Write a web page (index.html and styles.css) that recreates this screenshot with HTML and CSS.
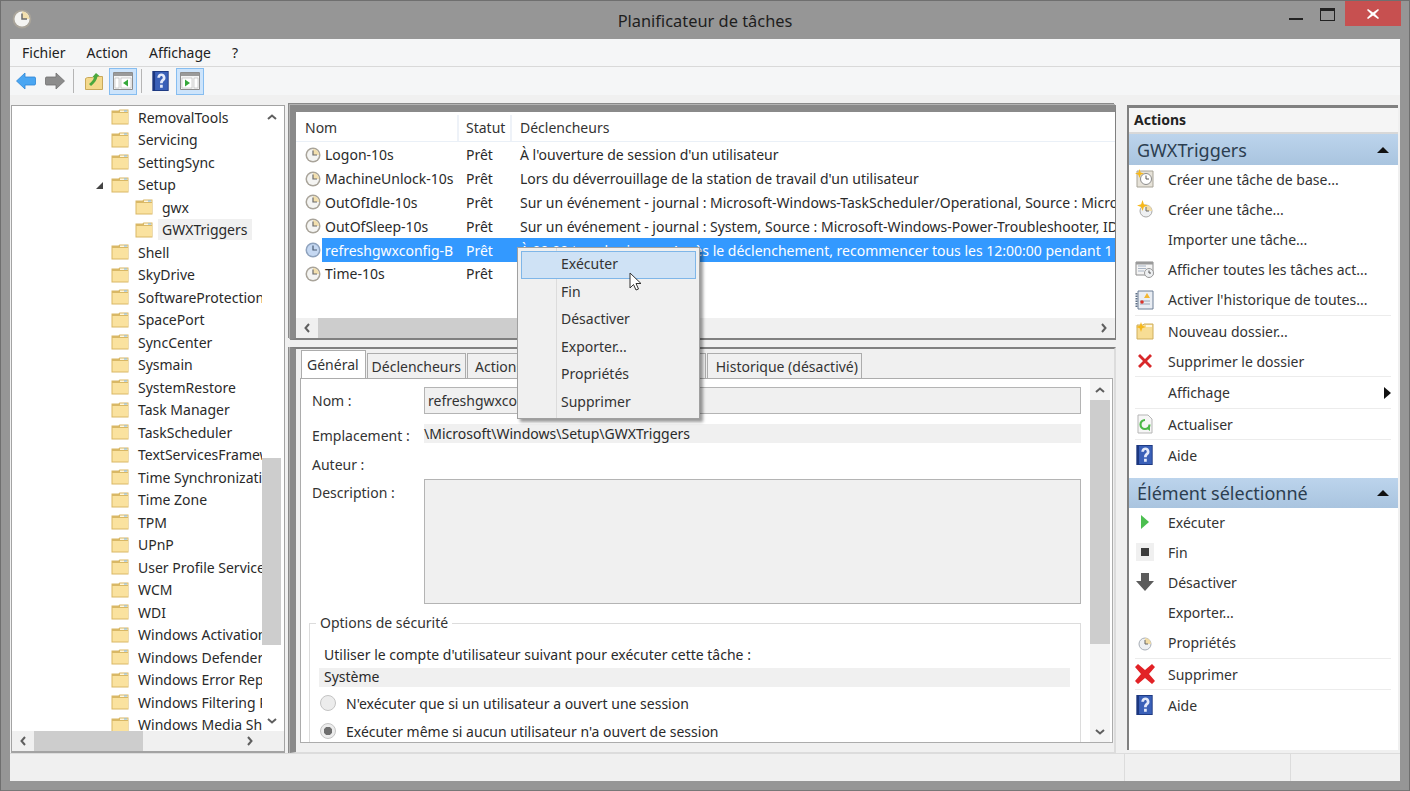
FILE: index.html
```html
<!DOCTYPE html>
<html lang="fr">
<head>
    <meta charset="UTF-8">
    <title>Planificateur de tâches</title>
    <link rel="stylesheet" href="styles.css">
</head>
<body>
    <svg class="icon-defs" width="0" height="0">
        <defs>
            <symbol id="clock" viewBox="0 0 16 16">
                <circle cx="8" cy="8" r="7.5" fill="#a9a49a"/>
                <circle cx="8" cy="8" r="6" fill="#f4f4f2"/>
                <path d="M8 2a6 6 0 0 1 6 6H8z" fill="#f2dfae"/>
                <path d="M8 3.5V8h4" fill="none" stroke="#6b6b6b" stroke-width="1.2"/>
            </symbol>
            <symbol id="clock-sel" viewBox="0 0 16 16">
                <circle cx="8" cy="8" r="7.5" fill="#8ea2bd"/>
                <circle cx="8" cy="8" r="6" fill="#c5d8f2"/>
                <path d="M8 3.5V8h4" fill="none" stroke="#4a5a70" stroke-width="1.2"/>
            </symbol>
            <symbol id="folder" viewBox="0 0 18 16">
                <path d="M.5 3.5V1.5h7l1-1h9v15H.5z" fill="#d9b866"/>
                <path d="M1.5 4h15.500v10.500H1.500z" fill="#fae29f"/>
                <path d="M9 1.500h7.500V3H9z" fill="#fdf6df"/>
                <path d="M13 1.500h3v1h-3z" fill="#7fb5dd"/>
            </symbol>
            <symbol id="help" viewBox="0 0 18 22">
                <path d="M0 0h18v22H0z" fill="#1c377f"/>
                <path d="M3 1h14v20H3z" fill="#3a60b8"/>
                <path d="M5.500 7.500c0-6.500 9-6.500 9 0 0 3.500-3 3.500-3 6H8.500c0-4.500 3-4 3-6 0-2.500-3-2.500-3 0zM8.500 15h3v3.500h-3z" fill="#e4eafa"/>
            </symbol>
            <symbol id="pane-left" viewBox="0 0 20 18">
                <path d="M.5.5h19v17H.5z" fill="#f4f4f4" stroke="#8d8d8d"/>
                <path d="M1 1h18v3H1z" fill="#9a9a9a"/>
                <path d="M2 6h4v10H2zM8 6h10v10H8z" fill="#fff" stroke="#b5b5b5" stroke-width=".6"/>
                <path d="M15 7.500v7l-5-3.500z" fill="#35a83a"/>
            </symbol>
            <symbol id="pane-right" viewBox="0 0 20 18">
                <path d="M.5.5h19v17H.5z" fill="#f4f4f4" stroke="#8d8d8d"/>
                <path d="M1 1h18v3H1z" fill="#9a9a9a"/>
                <path d="M2 6h10v10H2zM14 6h4v10h-4z" fill="#fff" stroke="#b5b5b5" stroke-width=".6"/>
                <path d="M5 7.500v7l5-3.500z" fill="#35a83a"/>
            </symbol>
            <symbol id="star" viewBox="0 0 8 8">
                <path d="M4 0l1 3 3 1-3 1-1 3-1-3-3-1 3-1z" fill="#f6b81c"/>
            </symbol>
            <symbol id="chev-up" viewBox="0 0 10 6">
                <path d="M1 5l4-3.500L9 5" fill="none" stroke="#5f5f5f" stroke-width="2"/>
            </symbol>
            <symbol id="chev-down" viewBox="0 0 10 6">
                <path d="M1 1l4 3.500L9 1" fill="none" stroke="#5f5f5f" stroke-width="2"/>
            </symbol>
            <symbol id="chev-left" viewBox="0 0 6 10">
                <path d="M5 1L1.500 5 5 9" fill="none" stroke="#5f5f5f" stroke-width="2"/>
            </symbol>
            <symbol id="chev-right" viewBox="0 0 6 10">
                <path d="M1 1l3.500 4L1 9" fill="none" stroke="#5f5f5f" stroke-width="2"/>
            </symbol>
        </defs>
    </svg>

    <div class="window">
        <header class="titlebar">
            <div class="title-left">
                <svg class="app-icon"><use href="#clock"/></svg>
            </div>
            <div class="title-text">Planificateur de tâches</div>
            <div class="caption">
                <span class="cap-min"></span>
                <span class="cap-max"></span>
                <span class="cap-close">
                    <svg width="12" height="10" viewBox="0 0 12 10"><path d="M1 0l5 3.500L11 0l1 1-4 4 4 4-1 1-5-3.500L1 10 0 9l4-4-4-4z" fill="#fff"/></svg>
                </span>
            </div>
        </header>

        <div class="client">
            <nav class="menubar">
                <span>Fichier</span>
                <span>Action</span>
                <span>Affichage</span>
                <span>?</span>
            </nav>

            <div class="toolbar">
                <svg class="tb-arrow" viewBox="0 0 20 18"><path d="M9 1v4h9.500c.5 0 1 .5 1 1v6c0 .5-.5 1-1 1H9v4L.5 9z" fill="#4aa6f2" stroke="#2f86d6" stroke-width=".8" stroke-linejoin="round"/></svg>
                <svg class="tb-arrow tb-forward" viewBox="0 0 20 18"><path d="M11 1v4H1.500c-.5 0-1 .5-1 1v6c0 .5.500 1 1 1H11v4l8.500-8z" fill="#8c8c8c" stroke="#707070" stroke-width=".8" stroke-linejoin="round"/></svg>
                <span class="tb-sep"></span>
                <svg class="tb-up" viewBox="0 0 18 18">
                    <path d="M.5 6.500l2-1h5l1-1h9v13H.5z" fill="#f4d98c" stroke="#c9a95a"/>
                    <path d="M4 12c2-2 4-3 5-6.500L7.500 5 11 1l3.500 3-2 .5C12 8 9.500 11 6 14z" fill="#4aa83e"/>
                </svg>
                <span class="tb-toggle"><svg class="tb-pane"><use href="#pane-left"/></svg></span>
                <span class="tb-sep tb-sep-b"></span>
                <svg class="tb-help"><use href="#help"/></svg>
                <span class="tb-toggle tb-toggle-b"><svg class="tb-pane"><use href="#pane-right"/></svg></span>
            </div>

            <main class="panes">
                <section class="tree-pane">
                    <div class="tree-body">
                        <ul class="tree">
                            <li><svg class="folder"><use href="#folder"/></svg>RemovalTools</li>
                            <li><svg class="folder"><use href="#folder"/></svg>Servicing</li>
                            <li><svg class="folder"><use href="#folder"/></svg>SettingSync</li>
                            <li class="open"><svg class="folder"><use href="#folder"/></svg>Setup</li>
                            <li class="sub"><svg class="folder"><use href="#folder"/></svg>gwx</li>
                            <li class="sub"><svg class="folder"><use href="#folder"/></svg><span class="tree-current">GWXTriggers</span></li>
                            <li><svg class="folder"><use href="#folder"/></svg>Shell</li>
                            <li><svg class="folder"><use href="#folder"/></svg>SkyDrive</li>
                            <li><svg class="folder"><use href="#folder"/></svg>SoftwareProtectionPlatform</li>
                            <li><svg class="folder"><use href="#folder"/></svg>SpacePort</li>
                            <li><svg class="folder"><use href="#folder"/></svg>SyncCenter</li>
                            <li><svg class="folder"><use href="#folder"/></svg>Sysmain</li>
                            <li><svg class="folder"><use href="#folder"/></svg>SystemRestore</li>
                            <li><svg class="folder"><use href="#folder"/></svg>Task Manager</li>
                            <li><svg class="folder"><use href="#folder"/></svg>TaskScheduler</li>
                            <li><svg class="folder"><use href="#folder"/></svg>TextServicesFramework</li>
                            <li><svg class="folder"><use href="#folder"/></svg>Time Synchronization</li>
                            <li><svg class="folder"><use href="#folder"/></svg>Time Zone</li>
                            <li><svg class="folder"><use href="#folder"/></svg>TPM</li>
                            <li><svg class="folder"><use href="#folder"/></svg>UPnP</li>
                            <li><svg class="folder"><use href="#folder"/></svg>User Profile Service</li>
                            <li><svg class="folder"><use href="#folder"/></svg>WCM</li>
                            <li><svg class="folder"><use href="#folder"/></svg>WDI</li>
                            <li><svg class="folder"><use href="#folder"/></svg>Windows Activation</li>
                            <li><svg class="folder"><use href="#folder"/></svg>Windows Defender</li>
                            <li><svg class="folder"><use href="#folder"/></svg>Windows Error Reporting</li>
                            <li><svg class="folder"><use href="#folder"/></svg>Windows Filtering Platform</li>
                            <li><svg class="folder"><use href="#folder"/></svg>Windows Media Sharing</li>
                        </ul>
                        <div class="vscroll tree-vscroll">
                            <span class="chev"><svg class="chev-v"><use href="#chev-up"/></svg></span>
                            <span class="vthumb-space"></span>
                            <span class="vthumb"></span>
                            <span class="chev chev-end"><svg class="chev-v"><use href="#chev-down"/></svg></span>
                        </div>
                    </div>
                    <div class="hscroll tree-hscroll">
                        <span class="h-chev"><svg class="chev-h"><use href="#chev-left"/></svg></span>
                        <span class="hthumb"></span>
                        <span class="h-chev h-chev-end"><svg class="chev-h"><use href="#chev-right"/></svg></span>
                    </div>
                </section>

                <section class="center-pane">
                    <div class="list-panel">
                        <div class="list-head">
                            <span class="col-name">Nom</span>
                            <span class="col-status">Statut</span>
                            <span class="col-trigger">Déclencheurs</span>
                        </div>
                        <div class="list-rows">
                            <div class="task"><svg class="clock"><use href="#clock"/></svg><div class="task-cells"><span class="cell-name">Logon-10s</span><span class="cell-status">Prêt</span><span class="cell-trigger">À l'ouverture de session d'un utilisateur</span></div></div>
                            <div class="task"><svg class="clock"><use href="#clock"/></svg><div class="task-cells"><span class="cell-name">MachineUnlock-10s</span><span class="cell-status">Prêt</span><span class="cell-trigger">Lors du déverrouillage de la station de travail d'un utilisateur</span></div></div>
                            <div class="task"><svg class="clock"><use href="#clock"/></svg><div class="task-cells"><span class="cell-name">OutOfIdle-10s</span><span class="cell-status">Prêt</span><span class="cell-trigger">Sur un événement - journal : Microsoft-Windows-TaskScheduler/Operational, Source : Microsoft-Windows</span></div></div>
                            <div class="task"><svg class="clock"><use href="#clock"/></svg><div class="task-cells"><span class="cell-name">OutOfSleep-10s</span><span class="cell-status">Prêt</span><span class="cell-trigger">Sur un événement - journal : System, Source : Microsoft-Windows-Power-Troubleshooter, ID</span></div></div>
                            <div class="task selected"><svg class="clock"><use href="#clock-sel"/></svg><div class="task-cells"><span class="cell-name">refreshgwxconfig-B</span><span class="cell-status">Prêt</span><span class="cell-trigger">À 00:00 tous les jours - Après le déclenchement, recommencer tous les 12:00:00 pendant 1 jour</span></div></div>
                            <div class="task"><svg class="clock"><use href="#clock"/></svg><div class="task-cells"><span class="cell-name">Time-10s</span><span class="cell-status">Prêt</span><span class="cell-trigger"></span></div></div>
                        </div>
                        <div class="hscroll list-hscroll">
                            <span class="h-chev"><svg class="chev-h"><use href="#chev-left"/></svg></span>
                            <span class="hthumb"></span>
                            <span class="h-chev h-chev-end"><svg class="chev-h"><use href="#chev-right"/></svg></span>
                        </div>
                    </div>

                    <div class="detail-panel">
                        <div class="tabs">
                            <span class="tab active">Général</span>
                            <span class="tab">Déclencheurs</span>
                            <span class="tab tab-mid">Actions</span>
                            <span class="tab tab-mid">Conditions</span>
                            <span class="tab tab-mid">Paramètres</span>
                            <span class="tab tab-last">Historique (désactivé)</span>
                        </div>
                        <div class="tab-body">
                            <div class="form">
                                <div class="form-row row-nom">
                                    <label>Nom :</label>
                                    <div class="field field-box">refreshgwxconfig-B</div>
                                </div>
                                <div class="form-row row-place">
                                    <label>Emplacement :</label>
                                    <div class="field field-flat">\Microsoft\Windows\Setup\GWXTriggers</div>
                                </div>
                                <div class="form-row row-author">
                                    <label>Auteur :</label>
                                </div>
                                <div class="form-row row-desc">
                                    <label>Description :</label>
                                    <div class="field field-area"></div>
                                </div>
                                <div class="security">
                                    <span class="legend">Options de sécurité</span>
                                    <p class="account-label">Utiliser le compte d'utilisateur suivant pour exécuter cette tâche :</p>
                                    <div class="account">Système</div>
                                    <div class="radio-row"><span class="radio"></span>N'exécuter que si un utilisateur a ouvert une session</div>
                                    <div class="radio-row"><span class="radio checked"></span>Exécuter même si aucun utilisateur n'a ouvert de session</div>
                                </div>
                            </div>
                            <div class="vscroll form-vscroll">
                                <span class="chev"><svg class="chev-v"><use href="#chev-up"/></svg></span>
                                <span class="vthumb"></span>
                                <span class="chev chev-end"><svg class="chev-v"><use href="#chev-down"/></svg></span>
                            </div>
                        </div>
                    </div>
                </section>

                <aside class="actions-pane">
                    <div class="actions-title">Actions</div>
                    <div class="group-head">GWXTriggers<span class="collapse"></span></div>
                    <ul class="action-list">
                        <li><svg class="a-icon" viewBox="0 0 20 20"><path d="M2 2h16v16H2z" fill="#e6e2d8" stroke="#a8a498"/><circle cx="11" cy="10" r="5.500" fill="#fff" stroke="#8c8c8c"/><path d="M11 6.500V10h3" fill="none" stroke="#555"/><use href="#star" x="0" y="0" width="9" height="9"/></svg>Créer une tâche de base...</li>
                        <li><svg class="a-icon" viewBox="0 0 20 20"><circle cx="11" cy="12" r="6" fill="#eef0f2" stroke="#a8a8a8"/><path d="M11 6a6 6 0 0 1 6 6h-6z" fill="#f2dca5"/><path d="M11 8v4h3" fill="none" stroke="#666"/><use href="#star" x="2" y="1" width="11" height="11"/></svg>Créer une tâche...</li>
                        <li><span class="a-icon"></span>Importer une tâche...</li>
                        <li><svg class="a-icon" viewBox="0 0 20 20"><path d="M1 3h17v13H1z" fill="#f4f4f4" stroke="#8c8c8c"/><path d="M1 3h17v2.500H1z" fill="#9a9a9a"/><path d="M3 7h8M3 9.500h8M3 12h6" stroke="#a8b4c4"/><circle cx="14" cy="14" r="4.500" fill="#eef0f2" stroke="#999"/><path d="M14 11.500V14h2" fill="none" stroke="#555"/></svg>Afficher toutes les tâches act...</li>
                        <li class="sep sep-tall"><svg class="a-icon" viewBox="0 0 20 20"><path d="M3 1h15v18H3z" fill="#e9edf3" stroke="#6c7e96"/><path d="M1.500 3v14" stroke="#5c6e86" stroke-width="2" stroke-dasharray="1.500 1"/><path d="M5 11h10M5 14h10" stroke="#9aa6b6"/><path d="M12 3l3 5H9z" fill="#f2b632"/><circle cx="7" cy="12" r="1.800" fill="#d9342b"/></svg>Activer l'historique de toutes...</li>
                        <li><svg class="a-icon" viewBox="0 0 20 20"><path d="M2 4h6l1-1h9v15H2z" fill="#f7dd95" stroke="#cfae5c"/><path d="M11 4h6v2h-6z" fill="#fdf6df"/><use href="#star" x="1" y="1" width="10" height="10"/></svg>Nouveau dossier...</li>
                        <li class="sep"><svg class="a-icon" viewBox="0 0 20 20"><path d="M3 5l2-2 5 5 5-5 2 2-5 5 5 5-2 2-5-5-5 5-2-2 5-5z" fill="#d8282a"/></svg>Supprimer le dossier</li>
                        <li class="sep sep-tall"><span class="a-icon"></span>Affichage<span class="submenu"></span></li>
                        <li class="sep"><svg class="a-icon" viewBox="0 0 20 20"><path d="M3 1h10l4 4v14H3z" fill="#f6f6f6" stroke="#b5b5b5"/><path d="M10 6a4.500 4.500 0 1 0 4.500 4.500" fill="none" stroke="#4cb848" stroke-width="2.200"/><path d="M11 14l4 3v-4z" fill="#4cb848"/></svg>Actualiser</li>
                        <li><svg class="a-icon a-help"><use href="#help"/></svg>Aide</li>
                    </ul>
                    <div class="group-head group-two">Élément sélectionné<span class="collapse"></span></div>
                    <ul class="action-list">
                        <li><svg class="a-icon" viewBox="0 0 20 20"><path d="M6 3l8 7-8 7z" fill="#4cbf50"/></svg>Exécuter</li>
                        <li><svg class="a-icon" viewBox="0 0 20 20"><path d="M1 1h18v18H1z" fill="#f0f0f0"/><path d="M6 6h8v8H6z" fill="#3c3c3c"/></svg>Fin</li>
                        <li><svg class="a-icon" viewBox="0 0 20 20"><path d="M6 1h8v8h5l-9 10L1 9h5z" fill="#5c5c5c"/></svg>Désactiver</li>
                        <li><span class="a-icon"></span>Exporter...</li>
                        <li class="sep sep-tall"><svg class="a-icon" viewBox="0 0 20 20"><circle cx="10" cy="11" r="6" fill="#eef0f2" stroke="#a8aeb6"/><path d="M10 5a6 6 0 0 1 6 6h-6z" fill="#f2dca5"/><path d="M10 7v4h3" fill="none" stroke="#666"/></svg>Propriétés</li>
                        <li class="sep"><svg class="a-icon a-big" viewBox="0 0 22 22"><path d="M1 4l3-3 7 6 7-6 3 3-6 7 6 7-3 3-7-6-7 6-3-3 6-7z" fill="#e22226"/></svg>Supprimer</li>
                        <li><svg class="a-icon a-help"><use href="#help"/></svg>Aide</li>
                    </ul>
                </aside>
            </main>

            <footer class="statusbar">
                <span class="status-main"></span>
                <span class="status-a"></span>
                <span class="status-b"></span>
            </footer>
        </div>

        <ul class="context-menu">
            <li class="hover">Exécuter</li>
            <li>Fin</li>
            <li>Désactiver</li>
            <li>Exporter...</li>
            <li>Propriétés</li>
            <li>Supprimer</li>
        </ul>
        <svg class="cursor" width="14" height="20" viewBox="0 0 14 20"><path d="M1 1v15l3.500-3.500L7 18l2.500-1-2.500-5.500h5z" fill="#fff" stroke="#333" stroke-width="1"/></svg>
    </div>
</body>
</html>
```

FILE: styles.css
```css
* {
    box-sizing: border-box;
}

html,
body {
    margin: 0;
    height: 100%;
    overflow: hidden;
}

body {
    font-family: "Noto Sans", sans-serif;
    font-size: 14px;
    color: #2a2a2a;
}

ul {
    list-style: none;
    margin: 0;
    padding: 0;
}

.icon-defs {
    position: absolute;
}

.window {
    position: relative;
    width: 1410px;
    height: 791px;
    display: flex;
    flex-direction: column;
    padding: 0 9px 9px;
    background: #969696;
    border: 1px solid #6f6f6f;
    border-bottom-color: #777;
}

/* title bar */
.titlebar {
    height: 38px;
    flex: none;
    display: grid;
    grid-template-columns: 1fr auto 1fr;
}

.app-icon {
    width: 20px;
    height: 20px;
    margin: 8px 0 0 2px;
}

.title-text {
    font-size: 16.400px;
    line-height: 40px;
    color: #1e1e1e;
}

.caption {
    display: flex;
    justify-content: flex-end;
    align-items: flex-start;
    margin-right: -1px;
}

.cap-min {
    width: 14px;
    height: 2px;
    margin: 17px 17px 0 0;
    background: #222;
}

.cap-max {
    width: 15px;
    height: 13px;
    margin: 7px 10px 0 0;
    border: 1px solid #222;
    border-top-width: 3px;
}

.cap-close {
    width: 56px;
    height: 25px;
    display: flex;
    align-items: center;
    justify-content: center;
    background: #c75050;
}

.client {
    flex: 1;
    min-height: 0;
    display: flex;
    flex-direction: column;
    background: #f0f0f0;
}

/* menu and toolbar */
.menubar {
    height: 28px;
    flex: none;
    display: flex;
    align-items: center;
    gap: 21px;
    padding: 0 0 0 12px;
    background: #f5f6f7;
    border-bottom: 1px solid #d9d9d9;
    color: #222;
}

.toolbar {
    height: 28px;
    flex: none;
    display: flex;
    align-items: center;
    background: #f5f6f7;
}

.tb-arrow {
    width: 20px;
    height: 18px;
    margin-left: 6px;
}

.tb-forward {
    margin-left: 9px;
}

.tb-sep {
    width: 1px;
    height: 24px;
    margin: 0 11px 0 8px;
    background: #b5b5b5;
}

.tb-sep-b {
    margin: 0 10px 0 4px;
}

.tb-up {
    width: 18px;
    height: 18px;
}

.tb-toggle {
    width: 28px;
    height: 27px;
    margin-left: 6px;
    display: flex;
    align-items: center;
    justify-content: center;
    background: #cde4fb;
    border: 1px solid #86bdf0;
}

.tb-toggle-b {
    margin-left: 7px;
}

.tb-pane {
    width: 20px;
    height: 18px;
}

.tb-help {
    width: 17px;
    height: 20px;
}

/* panes */
.panes {
    flex: 1;
    min-height: 0;
    display: flex;
    padding: 10px 2px 0 1px;
}

.tree-pane {
    width: 274px;
    flex: none;
    display: flex;
    flex-direction: column;
    background: #fff;
    border: 1px solid #a3a3a3;
    border-bottom-width: 2px;
}

.tree-body {
    flex: 1;
    min-height: 0;
    display: flex;
}

.tree {
    flex: 1;
    min-width: 0;
    overflow: hidden;
}

.tree li {
    height: 22.5px;
    display: flex;
    align-items: center;
    padding-left: 99px;
    white-space: nowrap;
    color: #2a2a2a;
}

.tree li.sub {
    padding-left: 123px;
}

.tree li.open {
    position: relative;
}

.tree li.open::before {
    content: "";
    position: absolute;
    left: 84px;
    top: 8px;
    border-left: 7px solid transparent;
    border-bottom: 7px solid #444;
}

.folder {
    width: 18px;
    height: 16px;
    flex: none;
    margin-right: 9px;
}

.tree-current {
    background: #f0f0f0;
    margin-left: -4px;
    padding: 1px 4px;
}

.vscroll {
    flex: none;
    display: flex;
    flex-direction: column;
    align-items: center;
    background: #f0f0f0;
}

.tree-vscroll {
    width: 19px;
    margin-right: 3px;
    background: #fff;
}

.chev {
    height: 21px;
    flex: none;
    display: flex;
    align-items: center;
}

.chev-end {
    margin-top: auto;
}

.chev-v {
    width: 10px;
    height: 6px;
    display: block;
}

.vthumb-space {
    height: 331px;
    flex: none;
}

.vthumb {
    width: 100%;
    height: 187px;
    flex: none;
    background: #cdcdcd;
}

.hscroll {
    height: 20px;
    flex: none;
    display: flex;
    align-items: center;
    background: #f0f0f0;
}

.h-chev {
    width: 22px;
    flex: none;
    display: flex;
    align-items: center;
    justify-content: center;
}

.h-chev-end {
    margin-left: auto;
}

.chev-h {
    width: 6px;
    height: 10px;
    display: block;
}

.hthumb {
    height: 100%;
    background: #cdcdcd;
}

.tree-hscroll .hthumb {
    width: 109px;
}

.tree-hscroll {
    padding-right: 23px;
}

/* centre */
.center-pane {
    width: 826px;
    flex: none;
    margin-left: 5px;
    display: flex;
    flex-direction: column;
    min-width: 0;
}

.list-panel {
    height: 235px;
    flex: none;
    display: flex;
    flex-direction: column;
    background: #fff;
    border: 1px solid #8a8a8a;
    border-width: 7px 1px 2px 6px;
    border-color: #8a8a8a #808080 #808080 #8a8a8a;
    box-shadow: -1px -1px 0 #b4b4b4, -2px -2px 0 #8a8a8a;
}

.list-head {
    height: 30px;
    flex: none;
    display: flex;
    align-items: center;
    padding-top: 2px;
    border-bottom: 1px solid #eaf0f7;
    color: #333;
}

.col-name {
    width: 163px;
    padding-left: 9px;
    line-height: 26px;
    border-right: 2px solid #eef2f8;
}

.col-status {
    width: 53px;
    padding-left: 7px;
    line-height: 26px;
    border-right: 2px solid #eef2f8;
}

.col-trigger {
    padding-left: 8px;
}

.list-rows {
    flex: 1;
    min-height: 0;
    padding-top: 1px;
    overflow: hidden;
}

.task {
    height: 23.8px;
    display: flex;
    align-items: center;
    padding-left: 9px;
}

.clock {
    width: 16px;
    height: 16px;
    flex: none;
}

.task-cells {
    flex: 1;
    min-width: 0;
    height: 100%;
    display: flex;
    align-items: center;
    margin-left: 1px;
    white-space: nowrap;
    overflow: hidden;
}

.cell-name {
    width: 144px;
    padding-left: 3px;
    flex: none;
    overflow: hidden;
}

.cell-status {
    width: 54px;
    flex: none;
}

.selected .task-cells {
    background: #3399ff;
    color: #fff;
}

.list-hscroll .hthumb {
    width: 380px;
}

.detail-panel {
    flex: 1;
    min-height: 0;
    margin-top: 7px;
    padding: 2px 0 9px 4px;
    display: flex;
    flex-direction: column;
    border-top: 2px solid #808080;
    border-left: 6px solid #8a8a8a;
    border-bottom: 1px solid #dcdcdc;
    border-right: 2px solid #dcdcdc;
    background: #f0f0f0;
    box-shadow: -1px 0 0 #b4b4b4, -2px 0 0 #8a8a8a;
}

.tabs {
    height: 27px;
    flex: none;
    display: flex;
    padding-left: 1px;
    gap: 1px;
    position: relative;
    z-index: 1;
}

.tab {
    padding: 2px 4px 0;
    margin-top: 2px;
    height: 25px;
    line-height: 21px;
    background: #f0f0f0;
    border: 1px solid #acacac;
    border-bottom: 0;
    color: #333;
    white-space: nowrap;
}

.tab.active {
    height: 28px;
    margin-top: -1px;
    padding: 3px 6px 0 5px;
    background: #fff;
}

.tab-mid {
    padding: 2px 5px 0 7px;
}

.tab-last {
    padding: 2px 3px 0 8px;
}

.tab-body {
    flex: 1;
    min-height: 0;
    display: flex;
    background: #fff;
    border: 1px solid #acacac;
    margin-right: 1px;
    overflow: hidden;
}

.form {
    flex: 1;
    min-width: 0;
    padding: 8px 1px 0 11px;
}

.form-row {
    display: flex;
}

.form-row label {
    width: 112px;
    flex: none;
    color: #333;
}

.field {
    flex: 1;
    background: #f0f0f0;
}

.row-nom {
    height: 27px;
    align-items: center;
}

.field-box {
    height: 27px;
    padding: 3px 3px;
    border: 1px solid #b4b4b4;
    line-height: 19px;
    white-space: nowrap;
    color: #333;
}

.row-place {
    margin-top: 10px;
    height: 19px;
    align-items: center;
}

.row-place label {
    padding-top: 4px;
}

.field-flat {
    height: 19px;
    line-height: 19px;
}

.row-author {
    margin-top: 11px;
    height: 20px;
    align-items: center;
}

.row-desc {
    margin-top: 5px;
}

.row-desc label {
    padding-top: 4px;
}

.field-area {
    height: 125px;
    border: 1px solid #b4b4b4;
}

.security {
    position: relative;
    margin: 19px 0 0 -3px;
    height: 130px;
    padding: 21px 10px 0 9px;
    border: 1px solid #dcdcdc;
    border-bottom: 0;
}

.legend {
    position: absolute;
    top: -11px;
    left: 6px;
    padding: 0 4px;
    background: #fff;
    color: #333;
}

.account-label {
    margin: 0 0 3px 5px;
    line-height: 20px;
}

.account {
    height: 19px;
    line-height: 18px;
    padding-left: 5px;
    margin-bottom: 2px;
    background: #f0f0f0;
}

.radio-row {
    height: 28px;
    margin-left: 1px;
    display: flex;
    align-items: center;
    white-space: nowrap;
}

.radio {
    width: 16px;
    height: 16px;
    flex: none;
    margin-right: 10px;
    border-radius: 50%;
    background: #ececec;
    border: 1px solid #c4c4c4;
}

.radio.checked {
    background: radial-gradient(circle, #6e6e6e 0 4px, #ececec 4.500px);
}

.form-vscroll {
    width: 20px;
    margin: 0 2px 0 8px;
    background: #f4f4f4;
}

.form-vscroll .vthumb {
    height: 244px;
}

/* actions */
.actions-pane {
    width: 271px;
    flex: none;
    margin: 0 0 3px 11px;
    background: #fff;
    border-top: 3px solid #808080;
    border-left: 2px solid #808080;
}

.actions-title {
    height: 26px;
    padding-left: 5px;
    line-height: 24px;
    font-weight: bold;
    color: #222;
    background: #f5f5f5;
    border-bottom: 2px solid #d8d8d8;
}

.group-head {
    height: 31px;
    display: flex;
    align-items: center;
    justify-content: space-between;
    padding: 0 9px 0 8px;
    font-size: 18px;
    color: #2c3e50;
    background: linear-gradient(#bcd4ec, #a9c4df);
}

.group-two {
    height: 30px;
    margin-top: 8px;
}

.collapse {
    border-left: 6px solid transparent;
    border-right: 6px solid transparent;
    border-bottom: 6px solid #111;
}

.action-list {
    margin-top: -1px;
}

.action-list li {
    height: 30px;
    display: flex;
    align-items: center;
    margin: 0 7px 0 6px;
    white-space: nowrap;
    color: #333;
}

.action-list li.sep {
    height: 31px;
    border-bottom: 1px solid #ececec;
}

.action-list li.sep-tall {
    height: 32px;
}

.a-icon {
    width: 20px;
    height: 20px;
    flex: none;
    margin-right: 13px;
}

.a-help {
    width: 17px;
    height: 20px;
    margin-left: 1px;
    margin-right: 15px;
}

.a-big {
    width: 22px;
    height: 22px;
    margin-left: -1px;
    margin-right: 12px;
}

.submenu {
    margin-left: auto;
    border-top: 6px solid transparent;
    border-bottom: 6px solid transparent;
    border-left: 7px solid #111;
}

/* status bar */
.statusbar {
    height: 28px;
    flex: none;
    display: flex;
    background: #f0f0f0;
    border-top: 1px solid #dcdcdc;
}

.status-main {
    width: 1114px;
}

.status-a {
    width: 166px;
    border-left: 1px solid #dcdcdc;
}

.status-b {
    flex: 1;
    border-left: 1px solid #dcdcdc;
}

/* popup menu, sits over the list and the tabs */
.context-menu {
    position: absolute;
    z-index: 5;
    left: 516px;
    top: 246px;
    width: 183px;
    height: 172px;
    padding: 3px;
    background: #f0f0f0 linear-gradient(#dcdcdc, #dcdcdc) 38px 0 / 1px 100% no-repeat;
    border: 1px solid #a0a0a0;
    box-shadow: 3px 3px 3px rgba(0, 0, 0, 0.4);
    color: #333;
}

.context-menu li {
    height: 27.600px;
    line-height: 26px;
    padding-left: 40px;
}

.context-menu li.hover {
    background: #cfe2f5;
    border: 1px solid #7fb6e8;
    padding-left: 39px;
    line-height: 24px;
}

.cursor {
    position: absolute;
    z-index: 6;
    left: 628px;
    top: 271px;
}
```
